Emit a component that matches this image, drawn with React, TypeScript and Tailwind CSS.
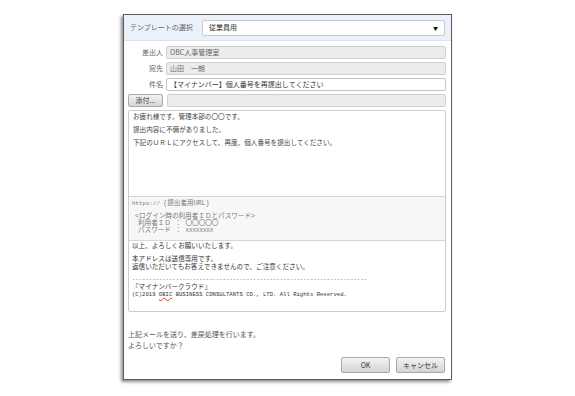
import React from 'react';

const jp = { fontFamily: '"Noto Sans CJK JP", "Noto Sans", sans-serif' };
const mono = { fontFamily: '"Liberation Mono", "Noto Sans CJK JP", monospace' };

function Row({ label, value, white }: { label: string; value: string; white?: boolean }) {
  return (
    <div className="flex h-[13px] items-center">
      <div className="w-[38px] pr-[3px] text-right text-[7px] text-[#666]">{label}</div>
      <div
        className={
          'flex h-full flex-1 items-center rounded-[2px] border px-[3px] text-[7px] ' +
          (white ? 'border-[#c4c4c4] bg-white text-[#333]' : 'border-[#cfcfcf] bg-[#ececec] text-[#666]')
        }
      >
        {value}
      </div>
    </div>
  );
}

export default function App() {
  const dashes = '-'.repeat(70);
  return (
    <div className="h-[396px] w-[575px] bg-white pt-[14px]" style={jp}>
      <div className="mx-auto flex h-[366px] w-[329px] flex-col border border-[#5c5c5c] bg-white shadow-[-2px_2px_3px_rgba(0,0,0,0.45)]">
        {/* テンプレート選択 */}
        <div className="flex h-[26px] items-center border-b border-[#dbe3ee] bg-[#ebf1fa] pl-[6px] pr-[6px]">
          <div className="w-[72px] text-[7px] text-[#666]">テンプレートの選択</div>
          <div className="flex h-[16px] flex-1 items-center justify-between rounded-[2px] border border-[#c8c8c8] bg-white px-[6px] text-[7px] text-[#333]">
            <span>従業員用</span>
            <span className="text-[5px] text-black">▼</span>
          </div>
        </div>

        <div className="flex flex-1 flex-col pl-[4px] pr-[5px] pt-[5px]">
          <div className="flex flex-col gap-[3px]">
            <Row label="差出人" value="OBC人事管理室" />
            <Row label="宛先" value="山田　一朗" />
            <Row label="件名" value="【マイナンバー】個人番号を再提出してください" white />
            <div className="flex h-[13px] items-center">
              <div className="mr-[4px] flex h-full w-[35px] items-center justify-center rounded-[2px] border border-[#a9a9a9] bg-gradient-to-b from-[#f2f2f2] to-[#d6d6d6] text-[7px] text-[#444]">
                添付...
              </div>
              <div className="h-full flex-1 rounded-[2px] border border-[#cfcfcf] bg-[#ececec]" />
            </div>
          </div>

          {/* 本文 */}
          <div className="mt-[3px] flex h-[202px] flex-col overflow-hidden rounded-[2px] border border-[#cccccc]">
            <div className="flex h-[85px] flex-col gap-[6px] px-[4px] pt-[2px] text-[6.6px] leading-[7px] text-[#444]">
              <div>お疲れ様です。管理本部の〇〇です。</div>
              <div>提出内容に不備がありました。</div>
              <div>下記のＵＲＬにアクセスして、再度、個人番号を提出してください。</div>
            </div>
            <div className="flex h-[45px] flex-col border-y border-[#d6d6d6] bg-[#f7f7f7] px-[3px] pt-[3px] text-[6.6px] leading-[7px] text-[#777]" style={mono}>
              <div>
                <span className="text-[5.8px]">https:// </span>(提出者用URL)
              </div>
              <div className="mt-[6px] pl-[3px]">&lt;ログイン時の利用者ＩＤとパスワード&gt;</div>
              <div className="pl-[6px]">利用者ＩＤ ： 〇〇〇〇〇</div>
              <div className="pl-[6px]">
                パスワード ： <span className="text-[5.8px]">XXXXXXXX</span>
              </div>
            </div>
            <div className="flex flex-1 flex-col px-[3px] pt-[2px] text-[6.6px] leading-[7.4px] text-[#333]" style={mono}>
              <div>以上、よろしくお願いいたします。</div>
              <div className="mt-[6px]">本アドレスは送信専用です。</div>
              <div>返信いただいてもお答えできませんので、ご注意ください。</div>
              <div className="mt-[5px] text-[5.6px] text-[#555]">{dashes}</div>
              <div>『マイナンバークラウド』</div>
              <div className="text-[5.6px]">
                (C)2019 <span className="underline decoration-[#d33] decoration-wavy decoration-[0.5px] underline-offset-[1px]">OBIC</span> BUSINESS CONSULTANTS CO., LTD. All Rights Reserved.
              </div>
            </div>
          </div>

          {/* 確認 */}
          <div className="mt-[19px] flex flex-col gap-[4px] text-[7px] leading-[7px] text-[#555]">
            <div>上記メールを送り、差戻処理を行います。</div>
            <div>よろしいですか？</div>
          </div>

          <div className="mt-[8px] flex justify-end gap-[6px] pr-[1px]">
            <button className="flex h-[16px] w-[49px] items-center justify-center rounded-[2px] border border-[#a9a9a9] bg-gradient-to-b from-[#f4f4f4] to-[#d4d4d4] text-[7px] text-[#333]">
              OK
            </button>
            <button className="flex h-[16px] w-[49px] items-center justify-center rounded-[2px] border border-[#a9a9a9] bg-gradient-to-b from-[#f4f4f4] to-[#d4d4d4] text-[7px] text-[#333]">
              キャンセル
            </button>
          </div>
        </div>
      </div>
    </div>
  );
}
